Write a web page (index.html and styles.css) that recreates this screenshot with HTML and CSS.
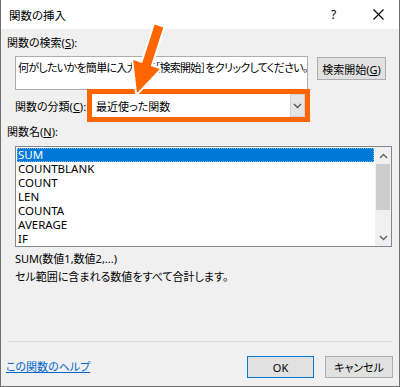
FILE: index.html
```html
<!DOCTYPE html>
<html lang="ja">
<head>
  <meta charset="UTF-8">
  <title>関数の挿入</title>
  <link rel="stylesheet" href="styles.css">
</head>
<body>
  <div class="dialog">
    <div class="titlebar">
      <span class="title">関数の挿入</span>
      <span class="help">?</span>
      <span class="close">
        <svg width="11" height="11" viewBox="0 0 11 11"><path d="M0.5 0.5L10.5 10.5M10.5 0.5L0.5 10.5" stroke="#000" stroke-width="1.1" fill="none"/></svg>
      </span>
    </div>
    <div class="content">
      <div class="label">関数の検索(<u>S</u>):</div>
      <div class="search-row">
        <div class="search-box">何がしたいかを簡単に入力して［検索開始］をクリックしてください。</div>
        <button class="btn search-btn">検索開始(<u>G</u>)</button>
      </div>
      <div class="category-row">
        <span class="category-label">関数の分類(<u>C</u>):</span>
        <div class="combo">
          <span class="combo-text">最近使った関数</span>
          <span class="combo-btn">
            <svg width="9" height="6" viewBox="0 0 9 6"><path d="M1 1L4.5 4.5L8 1" stroke="#555" stroke-width="1.3" fill="none"/></svg>
          </span>
        </div>
      </div>
      <div class="label list-label">関数名(<u>N</u>):</div>
      <div class="listbox">
        <ul class="items">
          <li class="selected">SUM</li>
          <li>COUNTBLANK</li>
          <li>COUNT</li>
          <li>LEN</li>
          <li>COUNTA</li>
          <li>AVERAGE</li>
          <li>IF</li>
        </ul>
        <div class="scrollbar">
          <span class="sb-arrow">
            <svg width="9" height="6" viewBox="0 0 9 6"><path d="M1 5L4.5 1.5L8 5" stroke="#606060" stroke-width="1.4" fill="none"/></svg>
          </span>
          <span class="sb-thumb"></span>
          <span class="sb-track"></span>
          <span class="sb-arrow">
            <svg width="9" height="6" viewBox="0 0 9 6"><path d="M1 1L4.5 4.5L8 1" stroke="#606060" stroke-width="1.4" fill="none"/></svg>
          </span>
        </div>
      </div>
      <div class="desc">
        <div>SUM(数値1,数値2,...)</div>
        <div>セル範囲に含まれる数値をすべて合計します。</div>
      </div>
    </div>
    <div class="footer">
      <a class="help-link" href="#">この関数のヘルプ</a>
      <div class="buttons">
        <button class="btn ok-btn">OK</button>
        <button class="btn cancel-btn">キャンセル</button>
      </div>
    </div>
    <svg class="arrow" width="400" height="387" viewBox="0 0 400 387">
      <polygon points="154.7,24.6 163.3,27.4 150.8,65.9 159.8,68.9 137,93 133.2,60.1 142.2,63.1" fill="#ff6600" stroke="#fff" stroke-width="4" stroke-linejoin="round" paint-order="stroke"/>
    </svg>
  </div>
</body>
</html>
```

FILE: styles.css
```css
* {
  box-sizing: border-box;
}
body {
  margin: 0;
  font-family: "Noto Sans", "Noto Sans CJK JP", sans-serif;
  font-size: 11px;
  font-feature-settings: "palt";
  color: #000;
  background: #f0f0f0;
}
.dialog {
  position: relative;
  width: 400px;
  height: 387px;
  display: flex;
  flex-direction: column;
  background: #f0f0f0;
  border: 1px solid #707070;
  border-top: none;
}
.titlebar {
  height: 29px;
  flex: none;
  display: flex;
  align-items: center;
  background: #fff;
  padding-left: 8px;
}
.title {
  flex: 1;
  font-size: 11.5px;
}
.help {
  width: 12px;
  font-size: 12px;
  margin-right: 30px;
}
.close {
  display: flex;
  margin-right: 15px;
}
.content {
  flex: 1;
  padding: 6px 6px 0 6px;
}
.label {
  line-height: 16px;
}
.search-row {
  display: flex;
  align-items: flex-start;
  margin: 5px 0 0 8px;
}
.search-box {
  width: 293px;
  height: 34px;
  flex: none;
  background: #fff;
  border: 1px solid #adadad;
  padding: 3px 2px;
  line-height: 16px;
  letter-spacing: -0.7px;
  white-space: nowrap;
  overflow: hidden;
}
.btn {
  font-family: inherit;
  font-size: 11px;
  font-feature-settings: "palt";
  color: #000;
  background: #e1e1e1;
  border: 1px solid #adadad;
  height: 22px;
  padding: 0;
}
.search-btn {
  width: 69px;
  height: 23px;
  flex: none;
  margin: 1px 0 0 9px;
}
.category-row {
  display: flex;
  align-items: center;
  margin: 4px 0 0 8px;
}
.category-label {
  width: 77px;
}
.combo {
  width: 213px;
  height: 23px;
  display: flex;
  align-items: center;
  background: #fff;
  outline: 5px solid #ff6600;
}
.combo-text {
  flex: 1;
  padding-left: 4px;
}
.combo-btn {
  width: 15px;
  height: 100%;
  display: flex;
  align-items: center;
  justify-content: center;
  background: #e5e5e5;
  border: 1px solid #d2d2d2;
}
.list-label {
  margin-top: 7px;
}
.listbox {
  display: flex;
  width: 377px;
  height: 101px;
  margin: 6px 0 0 8px;
  background: #fff;
  border: 1px solid #828790;
  overflow: hidden;
}
.items {
  flex: 1;
  list-style: none;
  margin: 0;
  padding: 1px 1px 0 1px;
}
.items li {
  height: 14px;
  line-height: 14px;
  padding-left: 1px;
  font-size: 11.5px;
}
.items .selected {
  background: #0078d7;
  color: #fff;
  outline: 1px dotted #7fb8e8;
  outline-offset: -1px;
}
.scrollbar {
  width: 16px;
  display: flex;
  flex-direction: column;
  background: #f0f0f0;
}
.sb-arrow {
  height: 17px;
  display: flex;
  align-items: center;
  justify-content: center;
}
.sb-thumb {
  height: 46px;
  margin: 0 1px;
  background: #cdcdcd;
}
.sb-track {
  flex: 1;
}
.desc {
  margin: 3px 0 0 8px;
  line-height: 18px;
}
.footer {
  height: 45px;
  flex: none;
  display: flex;
  align-items: flex-start;
  justify-content: space-between;
  margin: 0 6px 0 6px;
  border-top: 1px solid #dcdcdc;
  padding-top: 14px;
}
.help-link {
  color: #0066cc;
  line-height: 22px;
  margin-left: -1px;
}
.buttons {
  display: flex;
  gap: 11px;
}
.ok-btn {
  width: 67px;
  border-color: #0078d7;
}
.cancel-btn {
  width: 68px;
}
.arrow {
  position: absolute;
  left: -1px;
  top: 0;
  pointer-events: none;
}
```
